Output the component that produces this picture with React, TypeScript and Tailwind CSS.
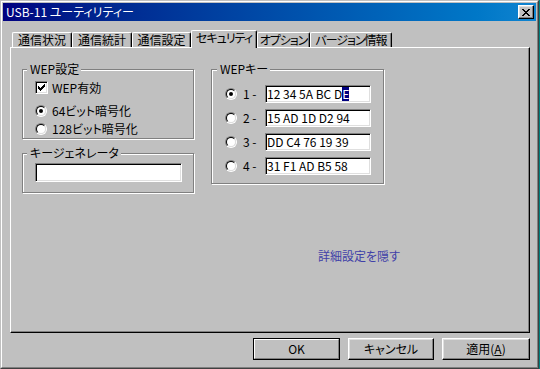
const tabs = [
  { label: '通信状況', w: 'w-[60px]', tight: false },
  { label: '通信統計', w: 'w-[60px]', tight: false },
  { label: '通信設定', w: 'w-[59px]', tight: false },
  { label: 'セキュリティ', w: 'w-[66px]', tight: true, active: true },
  { label: 'オプション', w: 'w-[53px]', tight: true },
  { label: 'バージョン情報', w: 'w-[82px]', tight: true },
];

const keys = ['12 34 5A BC D', '15 AD 1D D2 94', 'DD C4 76 19 39', '31 F1 AD B5 58'];

const Radio = ({ checked }: { checked?: boolean }) => (
  <span className="w-[12px] h-[12px] shrink-0 rounded-full border border-t-[#808080] border-l-[#808080] border-r-white border-b-white flex items-center justify-center">
    <span className="w-[10px] h-[10px] rounded-full border border-t-black border-l-black border-r-[#dfdfdf] border-b-[#dfdfdf] bg-white flex items-center justify-center">
      {checked && <span className="w-[4px] h-[4px] rounded-full bg-black" />}
    </span>
  </span>
);

const Checkbox = () => (
  <span className="w-[13px] h-[13px] shrink-0 border border-t-[#808080] border-l-[#808080] border-r-white border-b-white shadow-[inset_1px_1px_0_#000,inset_-1px_-1px_0_#dfdfdf] bg-white flex items-center justify-center">
    <svg width="7" height="7" viewBox="0 0 7 7" shapeRendering="crispEdges">
      <path d="M0 2h1v3h-1zM1 3h1v3h-1zM2 4h1v3h-1zM3 3h1v3h-1zM4 2h1v3h-1zM5 1h1v3h-1zM6 0h1v3h-1z" fill="#000" />
    </svg>
  </span>
);

const Legend = ({ children, className = '' }: { children: React.ReactNode; className?: string }) => (
  <div className={`-mt-[8px] w-fit pl-[3px] pr-[2px] bg-[#c0c0c0] leading-[14px] whitespace-nowrap ${className}`}>{children}</div>
);

const Field = ({ className = '', children }: { className?: string; children?: React.ReactNode }) => (
  <div
    className={`bg-white border border-t-[#808080] border-l-[#808080] border-r-white border-b-white shadow-[inset_1px_1px_0_#000,inset_-1px_-1px_0_#dfdfdf] flex items-center pl-[1px] leading-[14px] whitespace-nowrap ${className}`}
  >
    {children}
  </div>
);

const Button = ({ children, primary, w }: { children: React.ReactNode; primary?: boolean; w: string }) =>
  primary ? (
    <div className={`${w} h-[22px] border border-black`}>
      <div className="h-full border border-t-white border-l-white border-r-[#808080] border-b-[#808080] flex items-center justify-center leading-[14px]">
        {children}
      </div>
    </div>
  ) : (
    <div
      className={`${w} h-[22px] border border-t-white border-l-white border-r-black border-b-black shadow-[inset_-1px_-1px_0_#808080,inset_1px_1px_0_#dfdfdf] flex items-center justify-center leading-[14px]`}
    >
      {children}
    </div>
  );

export default function App() {
  return (
    <div className="w-[540px] h-[369px] bg-[#008080] flex font-['Noto_Sans_CJK_JP','Noto_Sans',sans-serif] [font-feature-settings:'palt'] text-[12px] text-black">
      <div className="w-[539px] h-[369px] bg-[#c0c0c0] border border-t-[#c0c0c0] border-l-[#c0c0c0] border-r-[#404040] border-b-[#404040]">
        <div className="h-full border border-t-white border-l-white border-r-[#808080] border-b-[#808080] p-[1px] flex flex-col">
          {/* title bar */}
          <div className="h-[18px] flex items-center justify-between bg-linear-to-r from-[#000080] to-[#1084d0] pl-[3px] pr-[2px]">
            <span className="text-white leading-[14px]">USB-11 ユーティリティー</span>
            <div className="w-[16px] h-[14px] border border-t-white border-l-white border-r-black border-b-black shadow-[inset_-1px_-1px_0_#808080,inset_1px_1px_0_#dfdfdf] bg-[#c0c0c0] flex items-center justify-center">
              <svg width="8" height="7" viewBox="0 0 8 7" shapeRendering="crispEdges">
                <path
                  d="M0 0h2v1h-2zM6 0h2v1h-2zM1 1h2v1h-2zM5 1h2v1h-2zM2 2h4v1h-4zM3 3h2v1h-2zM2 4h4v1h-4zM1 5h2v1h-2zM5 5h2v1h-2zM0 6h2v1h-2zM6 6h2v1h-2z"
                  fill="#000"
                />
              </svg>
            </div>
          </div>

          {/* tabs */}
          <div className="ml-[7px] mt-[9px] w-[520px] h-[17px] flex items-end pl-[2px]">
            {tabs.map((t) =>
              t.active ? (
                <div
                  key={t.label}
                  className={`${t.w} h-[18px] -mb-[1px] relative z-10 bg-[#c0c0c0] border-l border-t border-r border-l-white border-t-white border-r-black rounded-t-[2px] shadow-[inset_-1px_0_0_#808080] flex items-center justify-center pb-[3px] leading-[14px] whitespace-nowrap tracking-[-1px]`}
                >
                  {t.label}
                </div>
              ) : (
                <div
                  key={t.label}
                  className={`${t.w} h-[15px] bg-[#c0c0c0] border-l border-t border-r border-l-white border-t-white border-r-black rounded-t-[2px] shadow-[inset_-1px_0_0_#808080] flex items-center justify-center leading-[14px] whitespace-nowrap ${
                    t.tight ? 'tracking-[-1px]' : ''
                  }`}
                >
                  {t.label}
                </div>
              )
            )}
          </div>

          {/* panel */}
          <div className="ml-[7px] w-[520px] h-[286px] border border-t-white border-l-white border-r-black border-b-black shadow-[inset_-1px_-1px_0_#808080] pl-[11px] pt-[21px]">
            <div className="flex gap-[17px] items-start">
              <div className="flex flex-col w-[172px]">
                <div className="h-[70px] border border-[#808080] shadow-[inset_1px_1px_0_#fff,1px_1px_0_#fff]">
                  <Legend className="ml-[4px]">WEP設定</Legend>
                  <div className="mt-[5px] ml-[12px] h-[13px] flex items-center gap-[4px]">
                    <Checkbox />
                    <span className="leading-[14px]">WEP有効</span>
                  </div>
                  <div className="mt-[11px] ml-[12px] h-[12px] flex items-center gap-[5px]">
                    <Radio checked />
                    <span className="leading-[14px]">64ビット暗号化</span>
                  </div>
                  <div className="mt-[6px] ml-[12px] h-[12px] flex items-center gap-[5px]">
                    <Radio />
                    <span className="leading-[14px]">128ビット暗号化</span>
                  </div>
                </div>
                <div className="mt-[14px] h-[40px] border border-[#808080] shadow-[inset_1px_1px_0_#fff,1px_1px_0_#fff]">
                  <Legend className="ml-[4px]">キージェネレータ</Legend>
                  <Field className="mt-[3px] ml-[12px] w-[147px] h-[19px]" />
                </div>
              </div>

              <div className="w-[173px] h-[115px] border border-[#808080] shadow-[inset_1px_1px_0_#fff,1px_1px_0_#fff]">
                <Legend className="ml-[5px]">WEPキー</Legend>
                <div className="mt-[9px] flex flex-col gap-[6px]">
                  {keys.map((k, i) => (
                    <div key={k} className="h-[18px] ml-[13px] flex items-center">
                      <Radio checked={i === 0} />
                      <span className="ml-[6px] w-[22px] leading-[14px]">{i + 1} -</span>
                      <Field className="w-[106px] h-[18px]">
                        <span>{k}</span>
                        {i === 0 && <span className="bg-[#000080] text-white">E</span>}
                      </Field>
                    </div>
                  ))}
                </div>
              </div>
            </div>

            <div className="mt-[56px] ml-[296px] leading-[14px] text-[#4040a8]">詳細設定を隠す</div>
          </div>

          {/* buttons */}
          <div className="ml-[7px] mt-[5px] w-[520px] flex justify-end gap-[8px]">
            <Button primary w="w-[87px]">OK</Button>
            <Button w="w-[86px]">キャンセル</Button>
            <Button w="w-[88px]">
              適用(<span className="underline">A</span>)
            </Button>
          </div>
        </div>
      </div>
    </div>
  );
}
